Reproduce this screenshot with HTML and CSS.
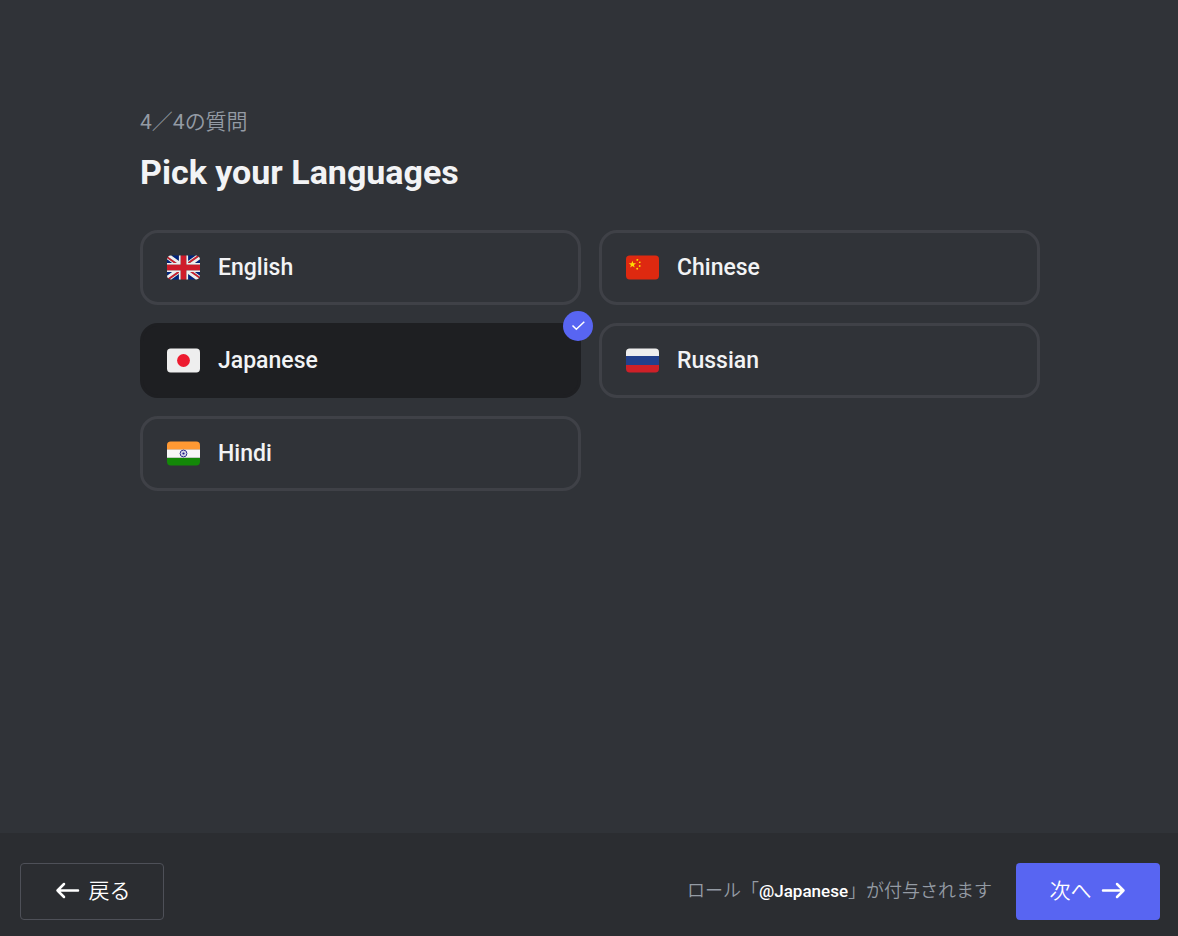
FILE: index.html
```html
<!DOCTYPE html>
<html lang="ja">
<head>
    <meta charset="UTF-8">
    <meta name="viewport" content="width=device-width, initial-scale=1.0">
    <title>Pick your Languages</title>
    <link rel="stylesheet" href="styles.css">
</head>
<body>

    <main class="content">
        <div class="question">
            <p class="step"><span class="step-number">4</span>／<span class="step-number">4</span>の質問</p>
            <h1 class="title">Pick your Languages</h1>

            <div class="options">
                <label class="option">
                    <input class="option-input" type="checkbox" name="language" value="english">
                    <svg class="flag" viewBox="0 0 36 36" aria-hidden="true">
                        <path fill="#00247D" d="M0 9.059V13h5.628zM4.664 31H13v-5.837zM23 25.164V31h8.335zM0 23v3.941L5.63 23zM31.337 5H23v5.837zM36 26.942V23h-5.631zM36 13V9.059L30.371 13zM13 5H4.664L13 10.837z"/>
                        <path fill="#CF1B2B" d="M25.14 23l9.712 6.801c.471-.479.808-1.082.99-1.749L28.627 23H25.14zM13 23h-2.141l-9.711 6.8c.521.53 1.189.909 1.938 1.085L13 23.943V23zm10-10h2.141l9.711-6.8c-.521-.53-1.188-.909-1.937-1.085L23 12.057V13zm-12.141 0L1.148 6.2C.677 6.68.34 7.282.157 7.949L7.372 13h3.487z"/>
                        <path fill="#EEE" d="M36 21H21v10h2v-5.836L31.335 31H32c1.117 0 2.126-.461 2.852-1.199L25.14 23h3.487l7.215 5.052c.093-.337.158-.686.158-1.052v-.058L30.369 23H36v-2zM0 21v2h5.63L0 26.941V27c0 1.091.439 2.078 1.148 2.8l9.711-6.8H13v.943l-9.814 6.941c.264.07.531.116.814.116h.664L13 25.163V31h2V21H0zM36 9c0-1.091-.439-2.078-1.148-2.8L25.141 13H23v-.943l9.815-6.942C32.55 5.046 32.284 5 32 5h-.663L23 10.837V5h-2v10h15v-2h-5.629L36 9.059V9zM13 5v5.837L4.664 5H4c-1.118 0-2.126.461-2.852 1.2l9.711 6.8H7.372L.157 7.949C.065 8.286 0 8.634 0 9v.059L5.628 13H0v2h15V5h-2z"/>
                        <path fill="#CF1B2B" d="M21 15V5h-6v10H0v6h15v10h6V21h15v-6z"/>
                    </svg>
                    <span class="option-name">English</span>
                </label>

                <label class="option">
                    <input class="option-input" type="checkbox" name="language" value="chinese">
                    <svg class="flag" viewBox="0 0 36 36" aria-hidden="true">
                        <rect y="5" width="36" height="26" rx="4" fill="#DE2910"/>
                        <path fill="#FFDE02" d="M7 10.500l1 2.900h3l-2.400 1.800.9 2.900L7 16.300 4.500 18.100l.9-2.900L3 13.400h3z"/>
                        <path fill="#FFDE02" d="M11.4 9.100l1.200-.5 1 .7-.7 1.400-1.400-.2zM14.300 11.700l1.200-.3.6 1.200-1 .9-1.200-.6zM14.200 15.600l1.300-.2.6 1.300-1.100.8-1.100-.7zM11.300 18.600l1.300-.4.8 1.100-.9 1.100-1.300-.6z"/>
                    </svg>
                    <span class="option-name">Chinese</span>
                </label>

                <label class="option">
                    <input class="option-input" type="checkbox" name="language" value="japanese" checked>
                    <svg class="flag" viewBox="0 0 36 36" aria-hidden="true">
                        <rect y="5" width="36" height="26" rx="4" fill="#EEE"/>
                        <circle cx="18" cy="18" r="7" fill="#ED1B2F"/>
                    </svg>
                    <span class="option-name">Japanese</span>
                    <span class="badge">
                        <svg class="badge-check" viewBox="0 0 14 14" aria-hidden="true">
                            <path d="M1.500 6.500l3.800 3.800 8-7.500"/>
                        </svg>
                    </span>
                </label>

                <label class="option">
                    <input class="option-input" type="checkbox" name="language" value="russian">
                    <svg class="flag" viewBox="0 0 36 36" aria-hidden="true">
                        <path fill="#CE2028" d="M36 27a4 4 0 0 1-4 4H4a4 4 0 0 1-4-4v-4h36v4z"/>
                        <path fill="#22408C" d="M0 13h36v10H0z"/>
                        <path fill="#EEE" d="M32 5H4a4 4 0 0 0-4 4v4h36V9a4 4 0 0 0-4-4z"/>
                    </svg>
                    <span class="option-name">Russian</span>
                </label>

                <label class="option">
                    <input class="option-input" type="checkbox" name="language" value="hindi">
                    <svg class="flag" viewBox="0 0 36 36" aria-hidden="true">
                        <path fill="#138808" d="M0 27a4 4 0 0 0 4 4h28a4 4 0 0 0 4-4v-4.500H0V27z"/>
                        <path fill="#FF9933" d="M36 14V9a4 4 0 0 0-4-4H4a4 4 0 0 0-4 4v5h36z"/>
                        <path fill="#F7F7F7" d="M0 13.700h36v9H0z"/>
                        <circle cx="18" cy="18" r="3.700" fill="none" stroke="#1A1A87" stroke-width="1"/>
                        <circle cx="18" cy="18" r="2.800" fill="#9C9CCB" fill-opacity=".4"/>
                        <circle cx="18" cy="18" r="1.200" fill="#1A1A87"/>
                    </svg>
                    <span class="option-name">Hindi</span>
                </label>
            </div>
        </div>
    </main>

    <footer class="footer">
        <button class="button button-back" type="button">
            <svg class="arrow" viewBox="0 0 27 27" aria-hidden="true">
                <path d="M24 13.500H3.500M10 7l-6.500 6.500L10 20"/>
            </svg>
            <span>戻る</span>
        </button>

        <div class="footer-end">
            <p class="role-note">ロール「<span class="role">@Japanese</span>」が付与されます</p>
            <button class="button button-next" type="button">
                <span>次へ</span>
                <svg class="arrow" viewBox="0 0 27 27" aria-hidden="true">
                    <path d="M3 13.500h20.500M17 7l6.500 6.500L17 20"/>
                </svg>
            </button>
        </div>
    </footer>

</body>
</html>
```
FILE: styles.css
```css
* {
    box-sizing: border-box;
}

body {
    display: flex;
    flex-direction: column;
    min-height: 100vh;
    margin: 0;
    background-color: #303338;
    color: #f2f3f5;
    font-family: Roboto, "Noto Sans CJK JP", sans-serif;
}

.content {
    flex: 1;
    padding: 106px 18px 40px 20px;
}

.question {
    max-width: 900px;
    margin: 0 auto;
}

.step {
    margin: 0;
    color: #949ba4;
    font-size: 21px;
    font-weight: 350;
    line-height: 32px;
}

.step-number {
    font-weight: 400;
}

.title {
    margin: 10px 0 34px;
    font-size: 34px;
    font-weight: 700;
    line-height: 48px;
}

.options {
    display: grid;
    grid-template-columns: repeat(2, 1fr);
    gap: 18px;
}

.option {
    position: relative;
    display: flex;
    align-items: center;
    gap: 18px;
    padding: 18px 24px;
    border: 3px solid #3f4147;
    border-radius: 18px;
    cursor: pointer;
}

.option:has(.option-input:checked) {
    background-color: #1e1f22;
    border-color: #1e1f22;
}

/* The checkbox covers the whole card */
.option-input {
    position: absolute;
    inset: 0;
    margin: 0;
    appearance: none;
    border-radius: 16px;
    cursor: pointer;
}

.flag {
    width: 33px;
    height: 33px;
}

.option-name {
    font-size: 23px;
    font-weight: 500;
    line-height: 33px;
}

.badge {
    position: absolute;
    top: -15px;
    right: -15px;
    display: flex;
    align-items: center;
    justify-content: center;
    width: 30px;
    height: 30px;
    border-radius: 50%;
    background-color: #5865f2;
}

.badge-check {
    width: 14px;
    height: 14px;
    fill: none;
    stroke: #fff;
    stroke-width: 1.5;
}

.footer {
    display: flex;
    align-items: center;
    justify-content: space-between;
    padding: 30px 18px 16px 20px;
    background-color: #2b2d31;
}

.footer-end {
    display: flex;
    align-items: center;
    gap: 24px;
}

.role-note {
    margin: 0;
    padding-bottom: 2px;
    color: #949ba4;
    font-size: 18px;
    font-weight: 350;
    line-height: 24px;
}

.role {
    color: #fff;
    font-size: 17px;
    font-weight: 500;
}

.button {
    display: flex;
    align-items: center;
    justify-content: center;
    gap: 8px;
    width: 144px;
    height: 57px;
    padding: 0 0 2px;
    border: 1px solid transparent;
    border-radius: 4px;
    color: #fff;
    font-family: inherit;
    font-size: 21px;
    font-weight: 350;
    line-height: 30px;
    cursor: pointer;
}

.button-back {
    border-color: #4e5058;
    background-color: transparent;
}

.button-next {
    background-color: #5865f2;
}

.arrow {
    width: 27px;
    height: 27px;
    fill: none;
    stroke: currentColor;
    stroke-width: 2.5;
    stroke-linecap: round;
    stroke-linejoin: round;
}
```
